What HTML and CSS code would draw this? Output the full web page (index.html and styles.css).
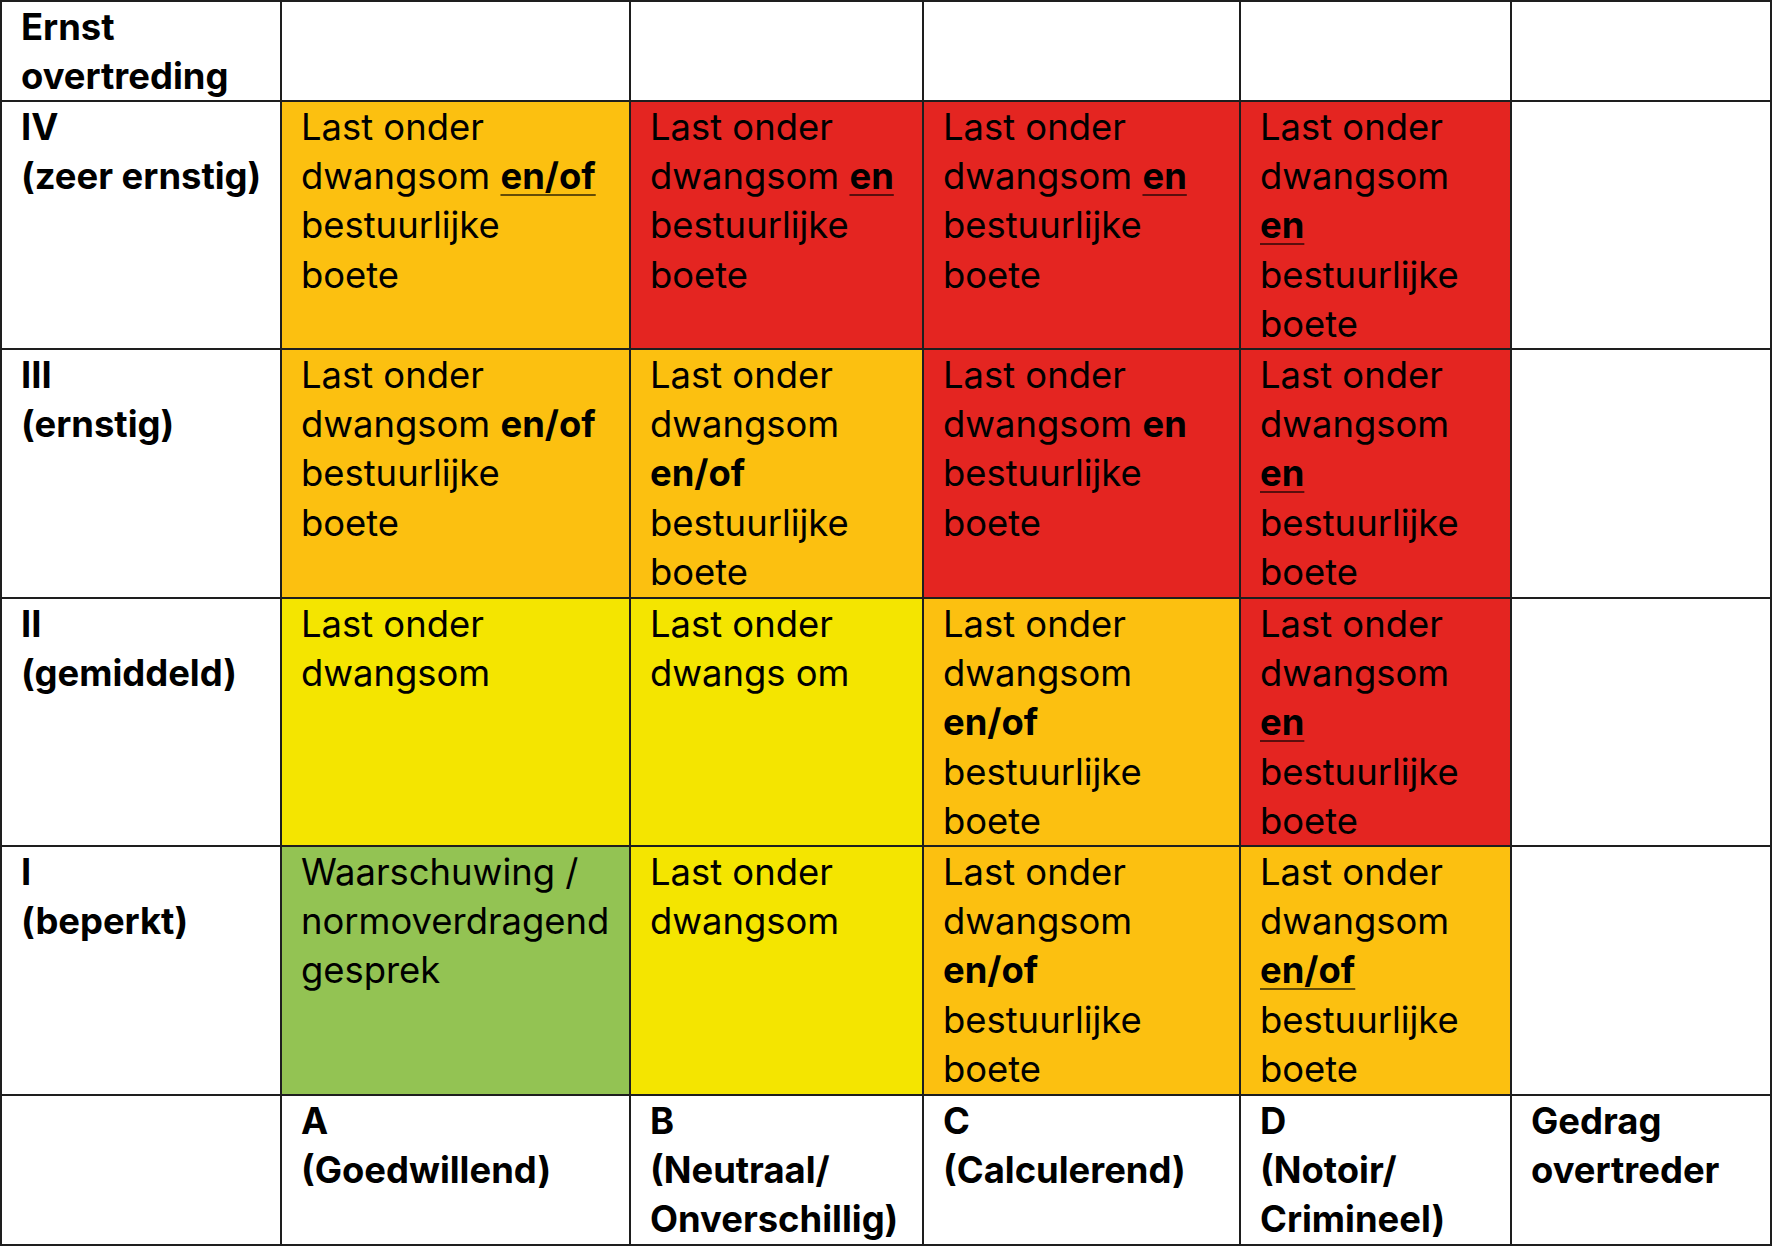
FILE: index.html
```html
<!DOCTYPE html>
<html lang="nl">
<head>
<meta charset="utf-8">
<title>Sanctiematrix</title>
<link rel="stylesheet" href="styles.css">
</head>
<body>
<div class="matrix">
  <div class="cell head">Ernst<br>overtreding</div>
  <div class="cell"></div>
  <div class="cell"></div>
  <div class="cell"></div>
  <div class="cell"></div>
  <div class="cell"></div>

  <div class="cell head">IV<br>(zeer ernstig)</div>
  <div class="cell orange">Last onder<br>dwangsom <b class="ul">en/of</b><br>bestuurlijke<br>boete</div>
  <div class="cell red">Last onder<br>dwangsom <b class="ul">en</b><br>bestuurlijke<br>boete</div>
  <div class="cell red">Last onder<br>dwangsom <b class="ul">en</b><br>bestuurlijke<br>boete</div>
  <div class="cell red">Last onder<br>dwangsom<br><b class="ul">en</b><br>bestuurlijke<br>boete</div>
  <div class="cell"></div>

  <div class="cell head">III<br>(ernstig)</div>
  <div class="cell orange">Last onder<br>dwangsom <b>en/of</b><br>bestuurlijke<br>boete</div>
  <div class="cell orange">Last onder<br>dwangsom<br><b>en/of</b><br>bestuurlijke<br>boete</div>
  <div class="cell red">Last onder<br>dwangsom <b>en</b><br>bestuurlijke<br>boete</div>
  <div class="cell red">Last onder<br>dwangsom<br><b class="ul">en</b><br>bestuurlijke<br>boete</div>
  <div class="cell"></div>

  <div class="cell head">II<br>(gemiddeld)</div>
  <div class="cell yellow">Last onder<br>dwangsom</div>
  <div class="cell yellow">Last onder<br>dwangs om</div>
  <div class="cell orange">Last onder<br>dwangsom<br><b>en/of</b><br>bestuurlijke<br>boete</div>
  <div class="cell red">Last onder<br>dwangsom<br><b class="ul">en</b><br>bestuurlijke<br>boete</div>
  <div class="cell"></div>

  <div class="cell head">I<br>(beperkt)</div>
  <div class="cell green">Waarschuwing /<br>normoverdragend<br>gesprek</div>
  <div class="cell yellow">Last onder<br>dwangsom</div>
  <div class="cell orange">Last onder<br>dwangsom<br><b>en/of</b><br>bestuurlijke<br>boete</div>
  <div class="cell orange">Last onder<br>dwangsom<br><b class="ul">en/of</b><br>bestuurlijke<br>boete</div>
  <div class="cell"></div>

  <div class="cell"></div>
  <div class="cell head">A<br>(Goedwillend)</div>
  <div class="cell head">B<br>(Neutraal/<br>Onverschillig)</div>
  <div class="cell head">C<br>(Calculerend)</div>
  <div class="cell head">D<br>(Notoir/<br>Crimineel)</div>
  <div class="cell head">Gedrag<br>overtreder</div>
</div>
</body>
</html>
```

FILE: styles.css
```css
html, body {
  margin: 0;
  padding: 0;
  background: #ffffff;
}

.matrix {
  display: grid;
  width: 1772px;
  height: 1246px;
  box-sizing: border-box;
  padding: 2px;
  gap: 2px;
  background: #1e1e1e;
  grid-template-columns: 278px 347px 291px 315px 269px 258px;
  grid-template-rows: 98px 246px 247px 246px 247px 148px;
  font-family: Inter, "Open Sans", "Liberation Sans", sans-serif;
  font-size: 36.4px;
  line-height: 49.2px;
  color: #000000;
}

.cell {
  background: #ffffff;
  padding: 1px 0 0 19px;
  white-space: nowrap;
  overflow: hidden;
}

.head {
  font-weight: 700;
}

.orange { background: #fcc010; }
.red { background: #e42521; }
.yellow { background: #f4e500; }
.green { background: #93c353; }

b {
  font-weight: 700;
}

.ul {
  text-decoration: underline;
  text-decoration-thickness: 2px;
  text-underline-offset: 5px;
  text-decoration-color: rgba(0, 0, 0, 0.6);
}
```
